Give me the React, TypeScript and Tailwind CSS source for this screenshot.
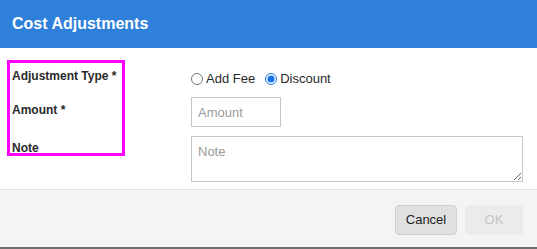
import React, { useState } from "react";

export default function App() {
  const [kind, setKind] = useState<"fee" | "discount">("discount");

  return (
    <div
      className="w-[537px] h-[249px] bg-white flex flex-col overflow-hidden"
      style={{ fontFamily: '"Liberation Sans", Arial, sans-serif' }}
    >
      {/* header */}
      <div className="h-[48px] shrink-0 bg-[#2f80da] flex items-center pl-[12px]">
        <h1 className="text-white font-bold text-[16px] leading-none">Cost Adjustments</h1>
      </div>

      {/* body */}
      <div className="h-[141px] shrink-0 flex">
        <div className="w-[191px] shrink-0 pl-[7px] pt-[12px]">
          <div className="w-[118px] h-[96px] border-[3px] border-[#ff00ff] pl-[2px] text-[12px] font-bold text-[#2a2a2a] leading-none whitespace-nowrap">
            <div className="pt-[7px]">Adjustment Type *</div>
            <div className="pt-[22px]">Amount *</div>
            <div className="pt-[26px]">Note</div>
          </div>
        </div>
        <div className="flex-1 pr-[14px]">
          <div className="flex items-center h-[18px] mt-[22px] text-[13px] text-[#2a2a2a]">
            <label className="flex items-center gap-[3px]">
              <input
                type="radio"
                name="kind"
                checked={kind === "fee"}
                onChange={() => setKind("fee")}
                className="w-[12px] h-[12px] m-0 accent-[#1a73e8]"
              />
              <span>Add Fee</span>
            </label>
            <label className="flex items-center gap-[3px] ml-[10px]">
              <input
                type="radio"
                name="kind"
                checked={kind === "discount"}
                onChange={() => setKind("discount")}
                className="w-[12px] h-[12px] m-0 accent-[#1a73e8]"
              />
              <span>Discount</span>
            </label>
          </div>
          <input
            placeholder="Amount"
            className="block mt-[9px] w-[90px] h-[30px] border border-[#c8c8c8] px-[6px] text-[13px] placeholder-[#9a9a9a] outline-none"
          />
          <textarea
            placeholder="Note"
            className="block mt-[9px] w-[332px] h-[46px] border border-[#c8c8c8] px-[6px] py-[5px] text-[13px] placeholder-[#9a9a9a] outline-none"
          />
        </div>
      </div>

      {/* footer */}
      <div className="flex-1 bg-[#f4f4f4] border-t border-[#e2e2e2] border-b-2 border-b-[#6f6f6f] flex items-start justify-end gap-[8px] pr-[14px] pt-[15px]">
        <button className="w-[62px] h-[30px] rounded-[4px] bg-[#e0e0e0] border border-[#cfcfcf] text-[13px] text-[#222]">
          Cancel
        </button>
        <button disabled className="w-[58px] h-[30px] rounded-[4px] bg-[#ebebeb] text-[13px] text-[#c4c4c4]">
          OK
        </button>
      </div>
    </div>
  );
}
